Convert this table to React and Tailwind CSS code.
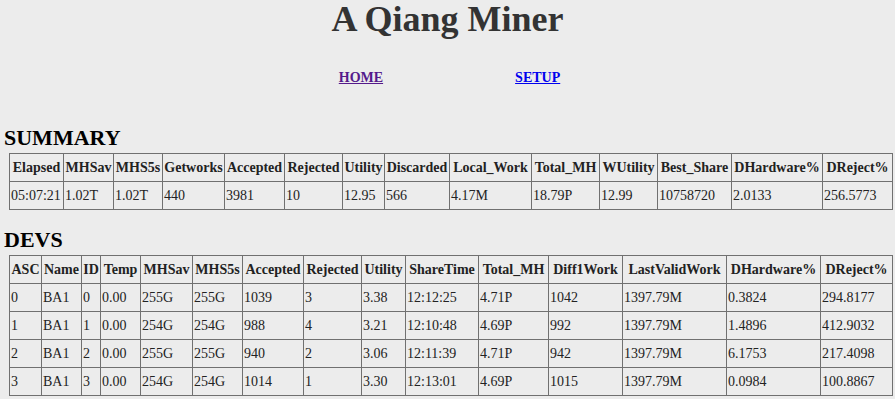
import React from "react";

const serif = { fontFamily: '"Liberation Serif", "Times New Roman", serif' };

const summaryCols = [54, 50, 49, 62, 60, 58, 42, 65, 82, 68, 58, 74, 91, 70];
const summaryHead = ["Elapsed", "MHSav", "MHS5s", "Getworks", "Accepted", "Rejected", "Utility", "Discarded", "Local_Work", "Total_MH", "WUtility", "Best_Share", "DHardware%", "DReject%"];
const summaryRows = [["05:07:21", "1.02T", "1.02T", "440", "3981", "10", "12.95", "566", "4.17M", "18.79P", "12.99", "10758720", "2.0133", "256.5773"]];

const devCols = [32, 40, 19, 40, 52, 50, 61, 58, 44, 73, 70, 74, 104, 94, 72];
const devHead = ["ASC", "Name", "ID", "Temp", "MHSav", "MHS5s", "Accepted", "Rejected", "Utility", "ShareTime", "Total_MH", "Diff1Work", "LastValidWork", "DHardware%", "DReject%"];
const devRows = [
  ["0", "BA1", "0", "0.00", "255G", "255G", "1039", "3", "3.38", "12:12:25", "4.71P", "1042", "1397.79M", "0.3824", "294.8177"],
  ["1", "BA1", "1", "0.00", "254G", "254G", "988", "4", "3.21", "12:10:48", "4.69P", "992", "1397.79M", "1.4896", "412.9032"],
  ["2", "BA1", "2", "0.00", "255G", "255G", "940", "2", "3.06", "12:11:39", "4.71P", "942", "1397.79M", "6.1753", "217.4098"],
  ["3", "BA1", "3", "0.00", "254G", "254G", "1014", "1", "3.30", "12:13:01", "4.69P", "1015", "1397.79M", "0.0984", "100.8867"],
];

function DataTable({ cols, head, rows }) {
  return (
    <table className="ml-[9px] w-[883px] table-fixed border-collapse text-[14px] text-[#222]">
      <colgroup>
        {cols.map((w, i) => (
          <col key={i} style={{ width: w }} />
        ))}
      </colgroup>
      <thead>
        <tr className="h-[28px]">
          {head.map((h) => (
            <th key={h} className="border border-[#707070] px-[1px] text-center font-bold leading-[16px] whitespace-nowrap">
              {h}
            </th>
          ))}
        </tr>
      </thead>
      <tbody>
        {rows.map((r, i) => (
          <tr key={i} className="h-[28px]">
            {r.map((c, j) => (
              <td key={j} className="border border-[#707070] px-[1px] text-left leading-[16px] whitespace-nowrap">
                {c}
              </td>
            ))}
          </tr>
        ))}
      </tbody>
    </table>
  );
}

export default function App() {
  return (
    <div className="min-h-screen w-full bg-[#ececec]" style={serif}>
      <h1 className="pt-[1px] text-center text-[36px] font-bold leading-[36px] text-[#333]">A Qiang Miner</h1>
      <nav className="mt-[33px] flex justify-center gap-[132px] pl-[4px] text-[14px] font-bold leading-[16px]">
        <a href="#" className="text-[#551a8b] underline">HOME</a>
        <a href="#" className="text-[#0000ee] underline">SETUP</a>
      </nav>
      <h2 className="mt-[39px] pl-[4px] text-[22px] font-bold leading-[26px] text-black">SUMMARY</h2>
      <div className="mt-[2px]">
        <DataTable cols={summaryCols} head={summaryHead} rows={summaryRows} />
      </div>
      <h2 className="mt-[17px] pl-[4px] text-[22px] font-bold leading-[26px] text-black">DEVS</h2>
      <div className="mt-[2px]">
        <DataTable cols={devCols} head={devHead} rows={devRows} />
      </div>
    </div>
  );
}
